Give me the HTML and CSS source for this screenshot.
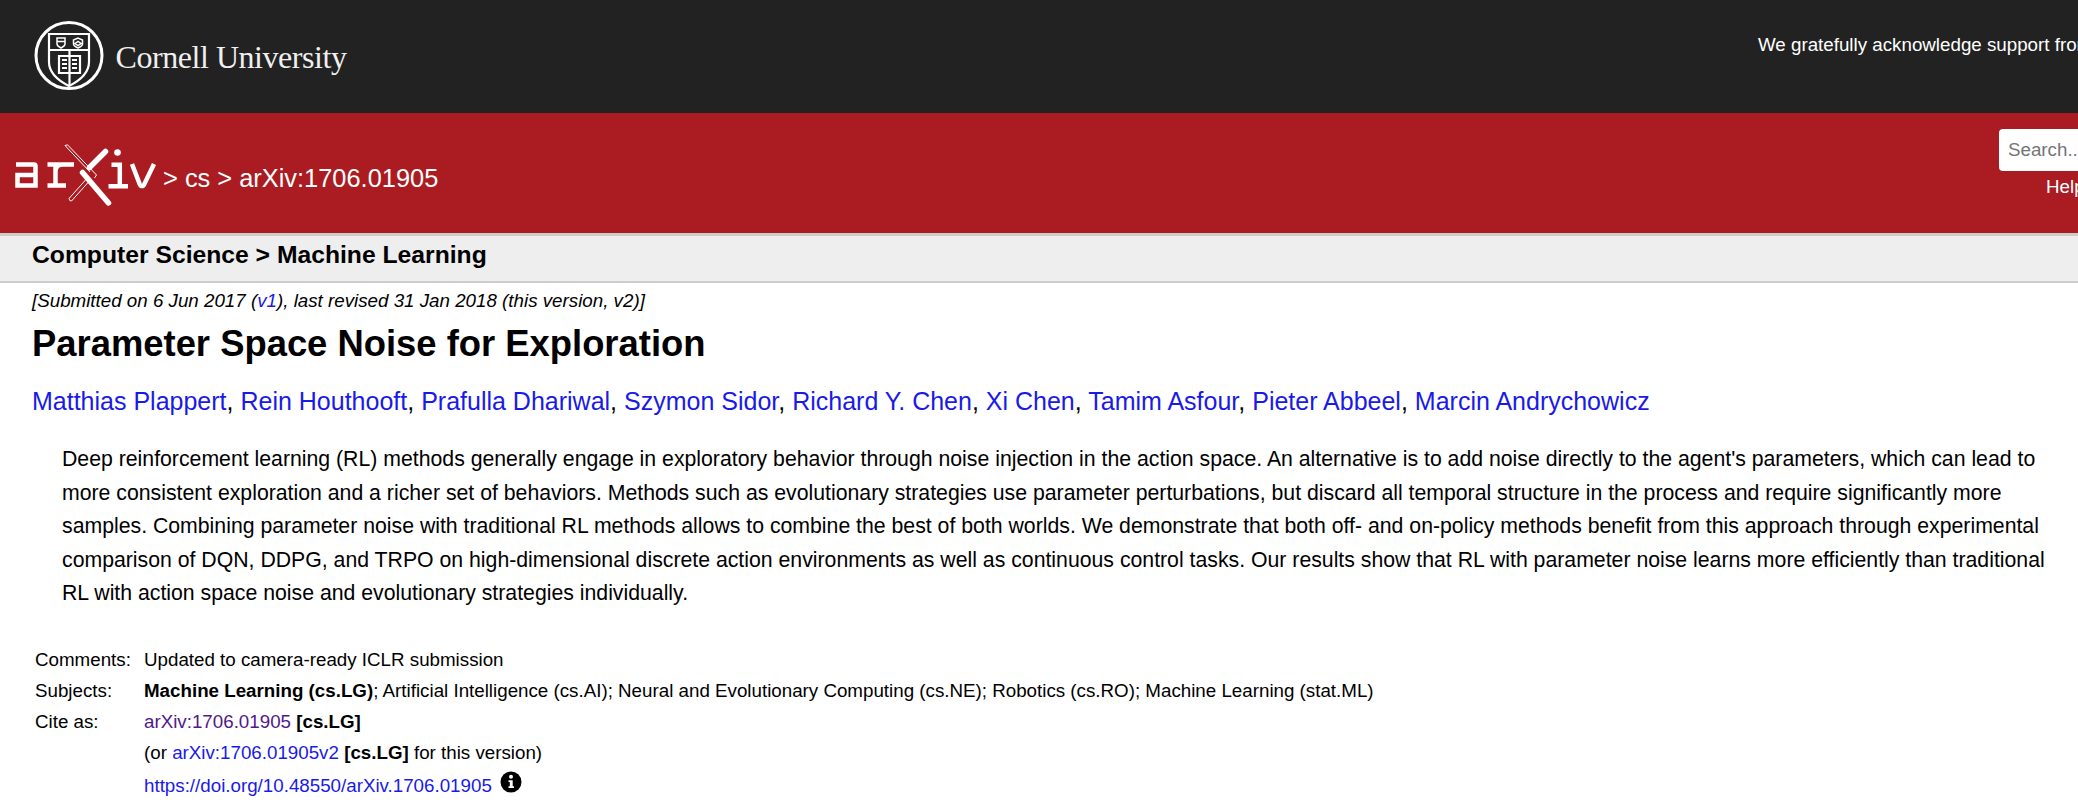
FILE: index.html
```html
<!DOCTYPE html>
<html lang="en">
<head>
<meta charset="utf-8">
<title>Parameter Space Noise for Exploration</title>
<link rel="stylesheet" href="styles.css">
</head>
<body>
<header>
  <div class="topbar">
    <a class="cornell">
      <svg class="seal" viewBox="0 0 70 70" width="70" height="70" fill="none" stroke="#fff">
        <circle cx="35" cy="34.500" r="33" stroke-width="3"/>
        <path d="M15 13H55V41C55 52 45 60 35 65C25 60 15 52 15 41Z" stroke-width="2.200"/>
        <path d="M15 29H55" stroke-width="2.200"/>
        <path d="M23 17H31V23C31 25 28 26.500 27 27C26 26.500 23 25 23 23ZM23 20.500H31" stroke-width="1.500"/>
        <path d="M39.500 19L44 17L48.500 19V23C48.500 25 45 26.500 44 27C43 26.500 39.500 25 39.500 23ZM41 22.500L44 20.500L47 22.500L44 24.500Z" stroke-width="1.500"/>
        <path d="M25 35H46V52H25ZM35.500 29V65" stroke-width="2.200"/>
        <path d="M28 39H33M28 43H33M28 47H33M38 39H43M38 43H43M38 47H43" stroke-width="1.800"/>
      </svg>
      <span class="cornell-name">Cornell University</span>
    </a>
    <p class="support">We gratefully acknowledge support from the Simons Foundation</p>
  </div>
  <div class="redbar">
    <div class="crumbs">
      <svg class="arxiv" viewBox="0 0 155 80" width="155" height="80" fill="none">
        <g stroke="#fff" stroke-width="4.500">
          <path d="M6 29.500H24Q25.500 29.500 25.500 31V50.500H7.500V40H24"/>
          <path d="M37.500 50.500H56M45.500 50.500V29.500M37.500 29.500H53Q45.500 29.500 45.500 36M53 29.500H64"/>
          <path d="M101.500 29.800H109.800V50.800M98.500 51.200H118"/>
          <path d="M122 29L129.800 49.300Q130.500 51 132 51Q133.500 51 134.200 49.300L144 29"/>
        </g>
        <circle cx="107.500" cy="17.500" r="3.300" fill="#fff"/>
        <path d="M72.500 37.500L98.500 68M79.500 32.500L95.500 16.500" stroke="#fff" stroke-width="5.500" stroke-linecap="round"/>
        <path d="M55 10.500L57.500 9.800L86.500 40L84.500 43M78.500 47L61.500 66Q59.500 66.500 59 63.500L75.500 45" stroke="#fff" stroke-width="1" stroke-linejoin="round"/>
        <path d="M55 10.500L80 37" stroke="#fff" stroke-width="1"/>
      </svg>
      <span class="trail">&gt; cs &gt; arXiv:1706.01905</span>
    </div>
    <div class="search">
      <input class="search-box" type="text" placeholder="Search...">
      <a class="help">Help | Advanced Search</a>
    </div>
  </div>
</header>
<div class="subheader"><h1>Computer Science &gt; Machine Learning</h1></div>
<main>
  <p class="dateline">[Submitted on 6 Jun 2017 (<a>v1</a>), last revised 31 Jan 2018 (this version, v2)]</p>
  <h2 class="title">Parameter Space Noise for Exploration</h2>
  <p class="authors"><a>Matthias Plappert</a>, <a>Rein Houthooft</a>, <a>Prafulla Dhariwal</a>, <a>Szymon Sidor</a>, <a>Richard Y. Chen</a>, <a>Xi Chen</a>, <a>Tamim Asfour</a>, <a>Pieter Abbeel</a>, <a>Marcin Andrychowicz</a></p>
  <blockquote class="abstract">Deep reinforcement learning (RL) methods generally engage in exploratory behavior through noise injection in the action space. An alternative is to add noise directly to the agent's parameters, which can lead to more consistent exploration and a richer set of behaviors. Methods such as evolutionary strategies use parameter perturbations, but discard all temporal structure in the process and require significantly more samples. Combining parameter noise with traditional RL methods allows to combine the best of both worlds. We demonstrate that both off- and on-policy methods benefit from this approach through experimental comparison of DQN, DDPG, and TRPO on high-dimensional discrete action environments as well as continuous control tasks. Our results show that RL with parameter noise learns more efficiently than traditional RL with action space noise and evolutionary strategies individually.</blockquote>
  <table class="meta">
    <tr><td class="label">Comments:</td><td>Updated to camera-ready ICLR submission</td></tr>
    <tr><td class="label">Subjects:</td><td><b>Machine Learning (cs.LG)</b>; Artificial Intelligence (cs.AI); Neural and Evolutionary Computing (cs.NE); Robotics (cs.RO); Machine Learning (stat.ML)</td></tr>
    <tr><td class="label">Cite as:</td><td><a class="visited">arXiv:1706.01905</a> <b>[cs.LG]</b></td></tr>
    <tr><td class="label"></td><td>(or <a>arXiv:1706.01905v2</a> <b>[cs.LG]</b> for this version)</td></tr>
    <tr><td class="label"></td><td><a>https://doi.org/10.48550/arXiv.1706.01905</a>
      <svg class="info" viewBox="0 0 22 22" width="22" height="22"><circle cx="11" cy="11" r="10.500" fill="#000"/><circle cx="11" cy="5.800" r="2" fill="#fff"/><path d="M8.500 9.300H12.700V15.300H14V17H8.500V15.300H9.800V11H8.500Z" fill="#fff"/></svg>
    </td></tr>
  </table>
</main>
</body>
</html>
```
FILE: styles.css
```css
html, body { margin: 0; padding: 0; }
body {
  width: 2078px;
  height: 808px;
  overflow: hidden;
  background: #fff;
  color: #000;
  font-family: "Liberation Sans", Arial, sans-serif;
}
a { color: #1a1ae8; }
p, h1, h2, blockquote { margin: 0; }

.topbar {
  height: 113px;
  background: #222;
  display: flex;
  align-items: flex-start;
  white-space: nowrap;
}
.cornell {
  width: 1758px;
  flex: none;
  display: flex;
  align-items: center;
  gap: 12px;
  padding: 21px 0 0 33.500px;
  box-sizing: border-box;
}
.cornell-name {
  color: #f0f0f0;
  font-family: "Liberation Serif", serif;
  font-size: 32px;
  letter-spacing: -0.45px;
  padding-top: 2px;
}
.support {
  color: #fff;
  font-size: 18.750px;
  padding-top: 34px;
}

.redbar {
  height: 120px;
  background: #aa1c21;
  display: flex;
  border-bottom: 3px solid #ccc;
  white-space: nowrap;
}
.crumbs {
  width: 1999px;
  flex: none;
  display: flex;
  align-items: flex-start;
  padding: 22px 0 0 10px;
  box-sizing: border-box;
}
.trail {
  color: #fff;
  font-size: 25.400px;
  padding-top: 29px;
  margin-left: -2px;
}
.search {
  padding-top: 16px;
  display: flex;
  flex-direction: column;
  align-items: flex-start;
}
.search-box {
  width: 200px;
  height: 42px;
  box-sizing: border-box;
  border: none;
  border-radius: 4px 0 0 4px;
  padding: 0 9px;
  font: 18.750px "Liberation Sans", Arial, sans-serif;
  background: #fff;
}
.search-box::placeholder { color: #757575; opacity: 1; }
.help {
  color: #fff;
  font-size: 18.750px;
  margin: 5px 0 0 47px;
}

.subheader {
  height: 45px;
  background: #eee;
  border-bottom: 2px solid #ccc;
  padding-left: 32px;
}
.subheader h1 { font-size: 24.700px; font-weight: 700; line-height: 38px; }

main { padding: 6px 32px 0; }
.dateline { font-size: 18.750px; font-style: italic; line-height: 24px; }
.title { font-size: 36.400px; font-weight: 700; line-height: 44px; margin-top: 9px; }
.authors { font-size: 25px; line-height: 30px; margin-top: 20px; }
.abstract {
  font-size: 21.250px;
  line-height: 33.500px;
  margin: 27px 0 0 30px;
  width: 1992px;
}
.meta {
  border-collapse: collapse;
  font-size: 18.750px;
  margin: 34px 0 0 3px;
}
.meta td { padding: 0; height: 31px; white-space: nowrap; }
.meta .label { width: 109px; }
.visited { color: #52188c; }
.info { vertical-align: -1px; margin-left: 3px; }
```
